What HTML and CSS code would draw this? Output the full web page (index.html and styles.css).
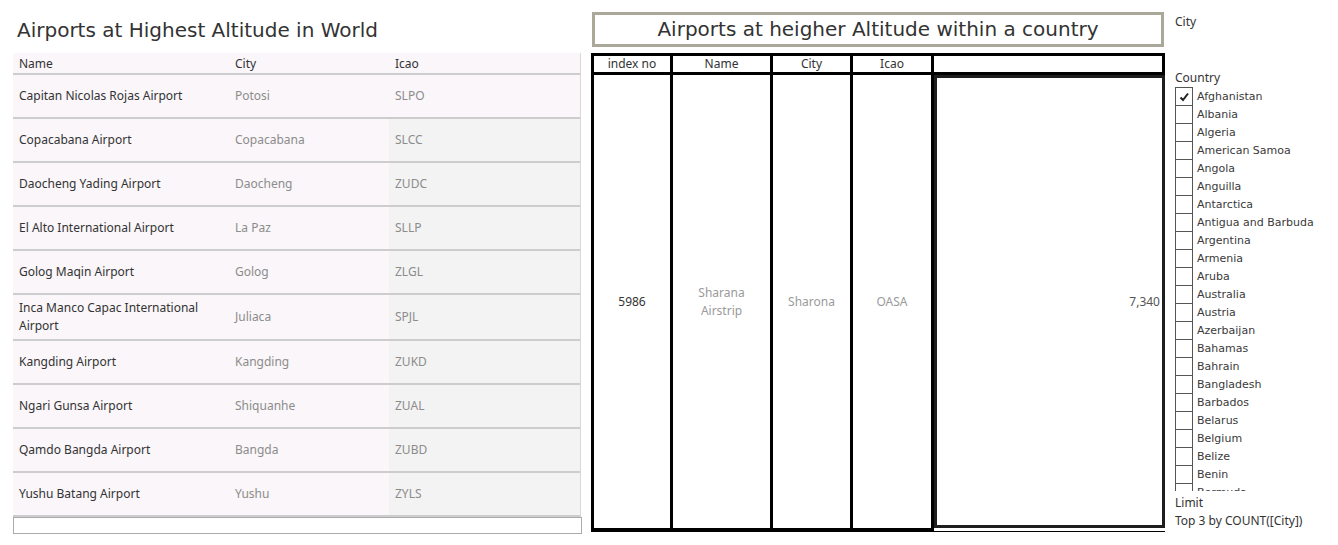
FILE: index.html
```html
<!DOCTYPE html>
<html>
<head>
<meta charset="utf-8">
<link rel="stylesheet" href="styles.css">
</head>
<body>
<div class="page">
  <section class="left">
    <h1 class="title">Airports at Highest Altitude in World</h1>
    <div class="wtable">
      <div class="wrow head"><div class="c name">Name</div><div class="c city">City</div><div class="c icao">Icao</div></div>
      <div class="wrow"><div class="c name">Capitan Nicolas Rojas Airport</div><div class="c city">Potosi</div><div class="c icao">SLPO</div></div>
      <div class="wrow alt"><div class="c name">Copacabana Airport</div><div class="c city">Copacabana</div><div class="c icao">SLCC</div></div>
      <div class="wrow alt"><div class="c name">Daocheng Yading Airport</div><div class="c city">Daocheng</div><div class="c icao">ZUDC</div></div>
      <div class="wrow alt"><div class="c name">El Alto International Airport</div><div class="c city">La Paz</div><div class="c icao">SLLP</div></div>
      <div class="wrow alt"><div class="c name">Golog Maqin Airport</div><div class="c city">Golog</div><div class="c icao">ZLGL</div></div>
      <div class="wrow alt"><div class="c name">Inca Manco Capac International Airport</div><div class="c city">Juliaca</div><div class="c icao">SPJL</div></div>
      <div class="wrow alt"><div class="c name">Kangding Airport</div><div class="c city">Kangding</div><div class="c icao">ZUKD</div></div>
      <div class="wrow alt"><div class="c name">Ngari Gunsa Airport</div><div class="c city">Shiquanhe</div><div class="c icao">ZUAL</div></div>
      <div class="wrow alt"><div class="c name">Qamdo Bangda Airport</div><div class="c city">Bangda</div><div class="c icao">ZUBD</div></div>
      <div class="wrow alt"><div class="c name">Yushu Batang Airport</div><div class="c city">Yushu</div><div class="c icao">ZYLS</div></div>
    </div>
    <div class="empty-box"></div>
  </section>

  <section class="right">
    <div class="rtitle">Airports at heigher Altitude within a country</div>
    <div class="ctable">
      <div class="hc first">index no</div>
      <div class="hc">Name</div>
      <div class="hc">City</div>
      <div class="hc">Icao</div>
      <div class="hc"></div>
      <div class="bc first dark">5986</div>
      <div class="bc">Sharana<br>Airstrip</div>
      <div class="bc">Sharona</div>
      <div class="bc">OASA</div>
      <div class="bc last"><div class="valbox">7,340</div></div>
    </div>
  </section>

  <aside class="side">
    <div class="slabel city-label">City</div>
    <div class="slabel country-label">Country</div>
    <div class="list">
      <div class="item"><span class="box"><svg width="15" height="16" viewBox="0 0 15 16"><path d="M3.5 8.5 L6 11 L11 4.5" fill="none" stroke="#222" stroke-width="2"/></svg></span><span>Afghanistan</span></div>
      <div class="item"><span class="box"></span><span>Albania</span></div>
      <div class="item"><span class="box"></span><span>Algeria</span></div>
      <div class="item"><span class="box"></span><span>American Samoa</span></div>
      <div class="item"><span class="box"></span><span>Angola</span></div>
      <div class="item"><span class="box"></span><span>Anguilla</span></div>
      <div class="item"><span class="box"></span><span>Antarctica</span></div>
      <div class="item"><span class="box"></span><span>Antigua and Barbuda</span></div>
      <div class="item"><span class="box"></span><span>Argentina</span></div>
      <div class="item"><span class="box"></span><span>Armenia</span></div>
      <div class="item"><span class="box"></span><span>Aruba</span></div>
      <div class="item"><span class="box"></span><span>Australia</span></div>
      <div class="item"><span class="box"></span><span>Austria</span></div>
      <div class="item"><span class="box"></span><span>Azerbaijan</span></div>
      <div class="item"><span class="box"></span><span>Bahamas</span></div>
      <div class="item"><span class="box"></span><span>Bahrain</span></div>
      <div class="item"><span class="box"></span><span>Bangladesh</span></div>
      <div class="item"><span class="box"></span><span>Barbados</span></div>
      <div class="item"><span class="box"></span><span>Belarus</span></div>
      <div class="item"><span class="box"></span><span>Belgium</span></div>
      <div class="item"><span class="box"></span><span>Belize</span></div>
      <div class="item"><span class="box"></span><span>Benin</span></div>
      <div class="item"><span class="box"></span><span>Bermuda</span></div>
    </div>
    <div class="slabel limit">Limit</div>
    <div class="slabel">Top 3 by COUNT([City])</div>
  </aside>
</div>
</body>
</html>
```

FILE: styles.css
```css
html, body {
  margin: 0;
  padding: 0;
  background: #ffffff;
}

body {
  font-family: "Noto Sans", "Lato", sans-serif;
  color: #333333;
}

.page {
  display: flex;
  height: 545px;
  overflow: hidden;
}

/* ---------- left worksheet ---------- */
.left {
  width: 568px;
  margin-left: 13px;
  flex: none;
}

.title {
  margin: 0;
  box-sizing: border-box;
  height: 53px;
  padding: 18px 0 0 4px;
  font-family: "DejaVu Sans", sans-serif;
  font-weight: normal;
  font-size: 20px;
  line-height: 24px;
  color: #333333;
}

.wtable {
  background: #faf6f9;
  border-right: 1px solid #d9d9d9;
  box-sizing: border-box;
}

.wrow {
  display: flex;
  min-height: 42px;
  border-bottom: 2px solid #cdcdcd;
}

.wrow.head {
  min-height: 18px;
  height: 20px;
}

.c {
  box-sizing: border-box;
  display: flex;
  align-items: center;
  padding: 4px 6px;
  font-size: 12px;
  line-height: 18px;
}

.head .c {
  padding: 2px 6px 0;
  color: #333333;
}

.name {
  width: 216px;
  color: #333333;
}

.city {
  width: 160px;
  color: #8c8c8c;
}

.icao {
  flex: 1;
  color: #8c8c8c;
}

.wrow.alt .icao {
  background: #f3f3f3;
}

.empty-box {
  margin-top: 0;
  height: 17px;
  border: 1px solid #ababab;
  box-sizing: border-box;
  width: 569px;
}

/* ---------- right worksheet ---------- */
.right {
  width: 574px;
  margin-left: 10px;
  flex: none;
}

.rtitle {
  box-sizing: border-box;
  width: 572px;
  height: 35px;
  margin: 12px 0 6px 1px;
  border: 3px solid #aca899;
  text-align: center;
  font-family: "DejaVu Sans", sans-serif;
  font-size: 20px;
  line-height: 29px;
  color: #333333;
}

.ctable {
  display: grid;
  grid-template-columns: 82px 100px 80px 81px 231px;
  grid-template-rows: 22px 457px;
}

.hc {
  box-sizing: border-box;
  border-top: 3px solid #000;
  border-bottom: 3px solid #000;
  border-right: 3px solid #000;
  font-size: 12px;
  line-height: 16px;
  text-align: center;
  color: #333333;
}

.hc.first,
.bc.first {
  border-left: 3px solid #000;
}

.bc {
  box-sizing: border-box;
  border-right: 3px solid #000;
  border-bottom: 4px solid #000;
  display: flex;
  align-items: center;
  justify-content: center;
  text-align: center;
  font-size: 12px;
  line-height: 18px;
  color: #9a9a9a;
}

.bc.dark {
  color: #333333;
}

.bc.last {
  border: none;
  border-bottom: 1px solid #000;
  padding-bottom: 3px;
  align-items: stretch;
  justify-content: stretch;
}

.valbox {
  box-sizing: border-box;
  flex: 1;
  border: 3px solid #1e1e1e;
  display: flex;
  align-items: center;
  justify-content: flex-end;
  padding-right: 2px;
  color: #555555;
  font-size: 12px;
}

/* ---------- sidebar ---------- */
.side {
  margin-left: 10px;
  width: 163px;
  flex: none;
}

.slabel {
  font-family: "Noto Sans", "Lato", sans-serif;
  font-size: 12px;
  line-height: 18px;
  color: #333333;
}

.city-label {
  margin-top: 13px;
}

.country-label {
  margin-top: 39px;
  height: 15px;
  line-height: 15px;
}

.list {
  margin-top: 2px;
  height: 404px;
  margin-bottom: 3px;
  overflow: hidden;
}

.item {
  display: flex;
  align-items: center;
  height: 18px;
  font-family: "DejaVu Sans", sans-serif;
  font-size: 11px;
  color: #3a3a3a;
}

.box {
  box-sizing: border-box;
  width: 18px;
  height: 18px;
  border: 1px solid #555555;
  border-bottom: none;
  margin-right: 4px;
  flex: none;
  display: flex;
  align-items: center;
  justify-content: center;
}

.limit {
  margin-top: 0;
}
```
